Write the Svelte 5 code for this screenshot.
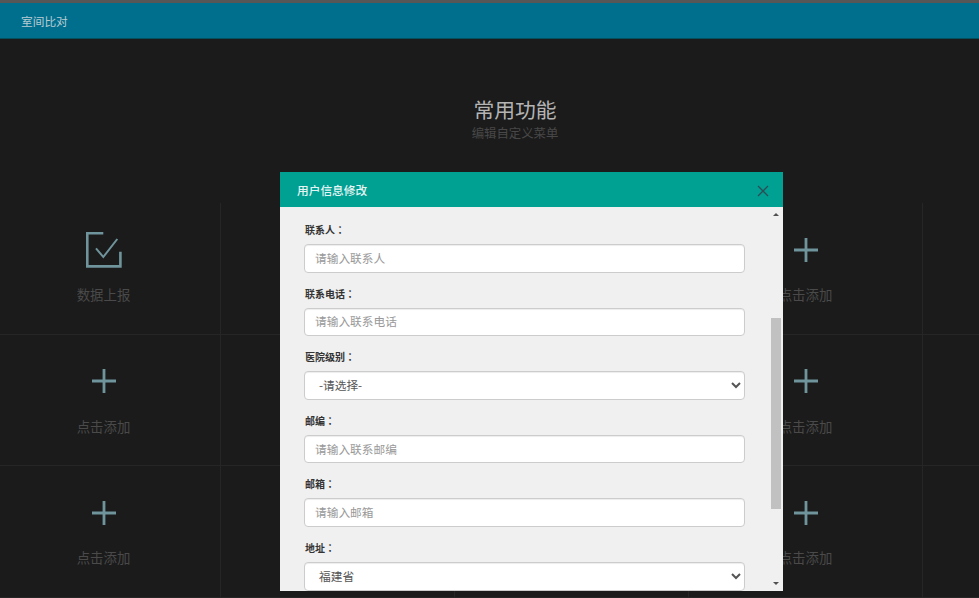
<script lang="ts">
    // Dashboard slots behind the dialog; the first one is already taken and
    // the fifth column only shows its grid lines at this window width.
    const cells = Array.from({ length: 15 }, (_, i) => ({
        label: i === 0 ? "数据上报" : "点击添加",
        checked: i === 0,
        empty: i % 5 === 4,
    }));

    const fields = [
        { label: "联系人：", placeholder: "请输入联系人" },
        { label: "联系电话：", placeholder: "请输入联系电话" },
        { label: "医院级别：", options: ["-请选择-"] },
        { label: "邮编：", placeholder: "请输入联系邮编" },
        { label: "邮箱：", placeholder: "请输入邮箱" },
        { label: "地址：", options: ["福建省"] },
    ];
</script>

<div class="page">
    <div class="strip"></div>
    <nav class="navbar">室间比对</nav>

    <header class="hero">
        <h1>常用功能</h1>
        <p>编辑自定义菜单</p>
    </header>

    <section class="grid">
        {#each cells as cell}
            <div class="cell">
                {#if cell.empty}
                    <!-- off screen -->
                {:else}
                    {#if cell.checked}
                        <svg class="icon-check" viewBox="0 0 38 38" fill="none" aria-hidden="true">
                            <path d="M18.3 2.3H2.3V35.4H35.4V20.7" stroke="#6f949c" stroke-width="2.6" />
                            <path d="M11 17.3L18.3 26L32.3 8" stroke="#6f949c" stroke-width="2" />
                        </svg>
                    {:else}
                        <svg class="icon-plus" viewBox="0 0 38 38" fill="none" aria-hidden="true">
                            <path d="M19 7V31M7 19H31" stroke="#6f949c" stroke-width="2.8" />
                        </svg>
                    {/if}
                    <span>{cell.label}</span>
                {/if}
            </div>
        {/each}
    </section>

    <div class="modal" role="dialog" aria-modal="true">
        <div class="modal-head">
            <h3>用户信息修改</h3>
            <svg class="close" viewBox="0 0 12 12" fill="none" aria-hidden="true">
                <path d="M1 1L11 11M11 1L1 11" stroke="#2c4f55" stroke-width="1.3" />
            </svg>
        </div>
        <div class="modal-body">
            <form>
                {#each fields as field}
                    <div class="form-group">
                        <span class="label">{field.label}</span>
                        {#if field.options}
                            <select>
                                {#each field.options as option}
                                    <option>{option}</option>
                                {/each}
                            </select>
                        {:else}
                            <input type="text" placeholder={field.placeholder} />
                        {/if}
                    </div>
                {/each}
            </form>
            <div class="scrollbar" aria-hidden="true">
                <i class="arrow up"></i>
                <i class="thumb"></i>
                <i class="arrow down"></i>
            </div>
        </div>
    </div>
</div>

<style>
    :global(body) {
        background: #1b1b1b;
    }

    .page {
        position: relative;
        width: 979px;
        height: 598px;
        overflow: hidden;
        background: #1b1b1b;
        font-family: "Noto Sans CJK SC", "Liberation Sans", sans-serif;
    }

    .strip {
        height: 3px;
        background: #575757;
    }

    .navbar {
        height: 36px;
        box-sizing: border-box;
        padding-left: 21px;
        line-height: 35px;
        font-size: 11.7px;
        color: #b9ccd2;
        background: #006f8e;
        border-bottom: 1px solid #04505f;
    }

    .hero {
        height: 164.4px;
        box-sizing: border-box;
        padding: 54px 0 0 51px;
        text-align: center;
    }

    h1 {
        margin: 0;
        font-size: 20.8px;
        line-height: 32px;
        font-weight: 400;
        color: #b4b4b4;
    }

    .hero p {
        margin: 1px 0 0;
        font-size: 12.4px;
        line-height: 14px;
        color: #484848;
    }

    .grid {
        display: grid;
        grid-template-columns: repeat(5, 234px);
        grid-auto-rows: 131.4px;
        margin-left: -13px;
    }

    .cell {
        box-sizing: border-box;
        display: flex;
        flex-direction: column;
        align-items: center;
        border-right: 1px solid #262626;
        border-bottom: 1px solid #262626;
        padding-top: 27.6px;
        color: #4a4a4a;
        font-size: 13.4px;
    }

    .cell svg {
        width: 38px;
        height: 38px;
    }

    .cell span {
        margin-top: 15.5px;
        line-height: 20px;
    }

    .modal {
        position: absolute;
        left: 280px;
        top: 172px;
        width: 503px;
        height: 419px;
        display: flex;
        flex-direction: column;
        background: #f0f0f0;
    }

    .modal-head {
        flex: none;
        height: 35px;
        display: flex;
        align-items: center;
        justify-content: space-between;
        padding: 0 14px 0 17px;
        background: #00a093;
    }

    h3 {
        margin: 0;
        font-size: 11.7px;
        font-weight: 500;
        color: #e6f5f3;
    }

    .close {
        width: 12px;
        height: 12px;
        margin-top: 2px;
    }

    .modal-body {
        position: relative;
        flex: 1;
        overflow: hidden;
        padding: 14px 38px 0 24px;
    }

    form {
        display: flex;
        flex-direction: column;
        gap: 12px;
    }

    .form-group {
        display: flex;
        flex-direction: column;
    }

    /* the TC face centres the full-width colon, as the reference does */
    .label {
        padding-left: 1px;
        font-family: "Noto Sans CJK TC", "Liberation Sans", sans-serif;
        font-size: 10px;
        line-height: 18px;
        font-weight: 700;
        color: #333;
        margin-bottom: 5px;
    }

    input,
    select {
        box-sizing: border-box;
        width: 100%;
        height: 28.6px;
        border: 1px solid #ccc;
        border-radius: 4px;
        background: #fff;
        font-family: inherit;
        font-size: 11.7px;
        color: #555;
        box-shadow: inset 0 1px 1px rgba(0, 0, 0, 0.075);
    }

    input {
        padding: 0 10px 2px;
    }

    input::placeholder {
        color: #999;
    }

    select {
        padding: 0 10px 2px;
    }

    .scrollbar {
        position: absolute;
        top: 0;
        right: 1px;
        bottom: 0;
        width: 11px;
    }

    .scrollbar i {
        position: absolute;
        display: block;
    }

    .thumb {
        left: 0;
        top: 111px;
        width: 10px;
        height: 191px;
        background: #c1c1c1;
    }

    .arrow {
        left: 2px;
        width: 0;
        height: 0;
        border-left: 3px solid transparent;
        border-right: 3px solid transparent;
    }

    .arrow.up {
        top: 6px;
        border-bottom: 3px solid #505050;
    }

    .arrow.down {
        bottom: 6px;
        border-top: 3px solid #505050;
    }
</style>
